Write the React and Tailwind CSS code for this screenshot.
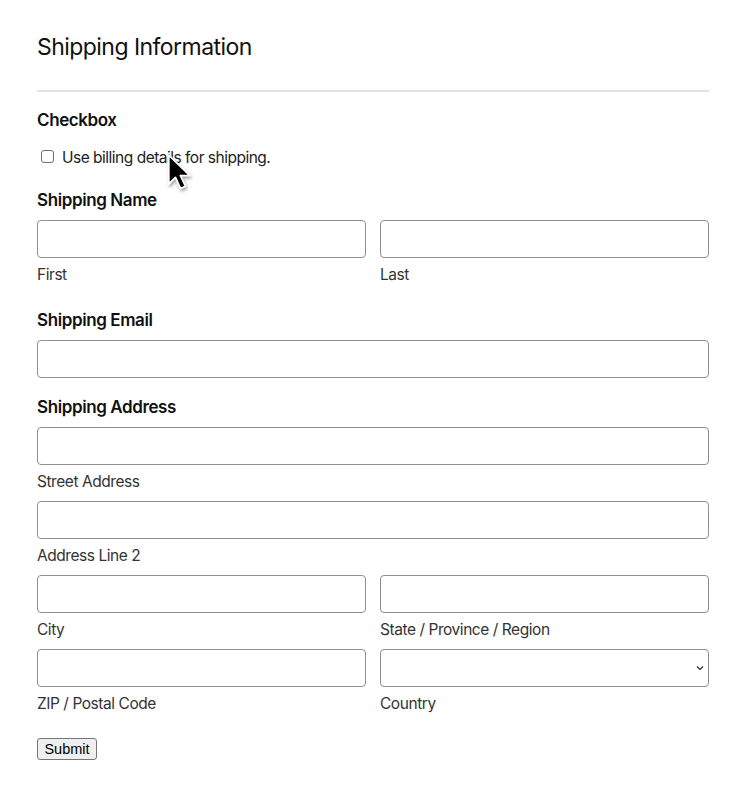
import React from "react";

function Field({ className = "" }) {
  return (
    <div className={"h-[38px] w-full rounded-[4px] border border-[#8f8f8f] bg-white " + className} />
  );
}

function Sub({ children }) {
  return <div className="mt-[5px] text-[15.5px] leading-[24px] tracking-[-0.45px] text-[#333]">{children}</div>;
}

function Heading({ children, className = "" }) {
  return (
    <div className={"text-[17px] font-semibold leading-[24px] tracking-[-0.4px] text-[#111] " + className}>{children}</div>
  );
}

export default function App() {
  return (
    <div className="relative min-h-[800px] bg-white px-[37px] pt-[31px] font-['Inter',sans-serif] text-[#111] w-[746px]">
      <h1 className="text-[23px] leading-[32px] font-normal tracking-[-0.55px]">Shipping Information</h1>
      <div className="mt-[27px] h-[2px] w-full bg-[#e2e2e2]" />
      <Heading className="mt-[16px]">Checkbox</Heading>
      <div className="mt-[14px] flex items-center gap-[8px] pl-[4px]">
        <span className="-mt-[3px] block h-[13px] w-[13px] rounded-[3px] border border-[#6f6f6f] bg-white" />
        <span className="text-[15.5px] leading-[24px] tracking-[-0.5px] text-[#222]">Use billing details for shipping.</span>
      </div>
      <Heading className="mt-[18px]">Shipping Name</Heading>
      <div className="mt-[8px] grid grid-cols-2 gap-x-[14px]">
        <div>
          <Field />
          <Sub>First</Sub>
        </div>
        <div>
          <Field />
          <Sub>Last</Sub>
        </div>
      </div>
      <Heading className="mt-[21px]">Shipping Email</Heading>
      <Field className="mt-[8px]" />
      <Heading className="mt-[17px]">Shipping Address</Heading>
      <div className="mt-[8px]">
        <Field />
        <Sub>Street Address</Sub>
      </div>
      <div className="mt-[7px]">
        <Field />
        <Sub>Address Line 2</Sub>
      </div>
      <div className="mt-[7px] grid grid-cols-2 gap-x-[14px] gap-y-[7px]">
        <div>
          <Field />
          <Sub>City</Sub>
        </div>
        <div>
          <Field />
          <Sub>State / Province / Region</Sub>
        </div>
        <div>
          <Field />
          <Sub>ZIP / Postal Code</Sub>
        </div>
        <div>
          <div className="relative">
            <Field />
            <svg className="absolute right-[4px] top-[14px]" width="10" height="10" viewBox="0 0 10 10">
              <path d="M2 3.5 L5 6.5 L8 3.5" fill="none" stroke="#222" strokeWidth="1.1" />
            </svg>
          </div>
          <Sub>Country</Sub>
        </div>
      </div>
      <button className="mt-[22px] h-[22px] w-[60px] rounded-[3px] border border-[#767676] bg-[#efefef] font-['Liberation_Sans',Arial,sans-serif] text-[14.5px] leading-[20px] text-black">
        Submit
      </button>
      <svg className="absolute left-[166px] top-[154px]" width="30" height="40" viewBox="0 0 26 36">
        <path
          d="M2 1 L2 27 L8 21 L12.5 31 L17 29 L12.5 19.5 L21 19.5 Z"
          fill="#000"
          stroke="#fff"
          strokeWidth="1.6"
          strokeLinejoin="round"
          style={{ filter: "drop-shadow(1px 2px 1.5px rgba(0,0,0,0.35))" }}
        />
      </svg>
    </div>
  );
}
